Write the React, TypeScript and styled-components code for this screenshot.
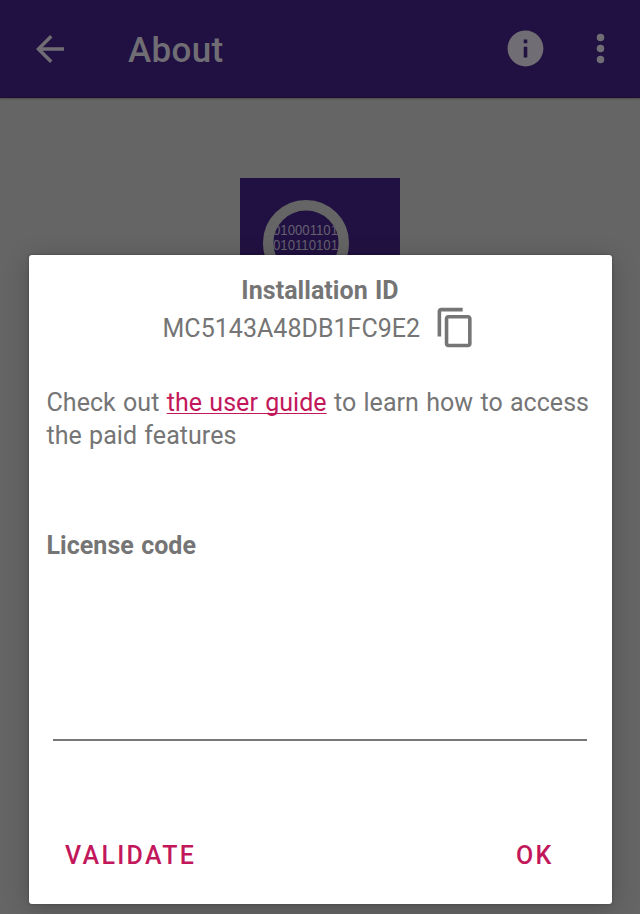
import React from 'react';
import styled, { createGlobalStyle } from 'styled-components';

const GlobalStyle = createGlobalStyle`
  * { box-sizing: border-box; }
  body { margin: 0; background: #656565; }
`;

const Screen = styled.div`
  position: relative;
  width: 640px;
  height: 914px;
  overflow: hidden;
  background: #656565;
  font-family: Roboto, sans-serif;
  color: #757575;
`;

const AppBar = styled.header`
  display: flex;
  align-items: center;
  height: 98px;
  padding: 0 18px 0 28.5px;
  background: #211142;
  border-bottom: 1px solid #1b0b2c;
  box-shadow: 0 1px 2px rgba(0, 0, 0, 0.25);
  color: #706e74;
`;

const Title = styled.h1`
  flex: 1;
  margin: 4px 0 0 57.5px;
  font-size: 35px;
  font-weight: 500;
  line-height: 42px;
  letter-spacing: 0.3px;
`;

const Actions = styled.div`
  display: flex;
  align-items: center;
  gap: 32px;
`;

const Icon = styled.svg<{ $size: number }>`
  display: block;
  flex: none;
  width: ${({ $size }) => $size}px;
  height: ${({ $size }) => $size}px;
  fill: currentColor;
`;

const Content = styled.main`
  display: flex;
  justify-content: center;
  padding-top: 80px;
`;

const Logo = styled.svg`
  display: block;
  width: 160px;
  height: 160px;
`;

const Dialog = styled.section`
  position: absolute;
  left: 28.5px;
  top: 254.5px;
  width: 583px;
  height: 649px;
  padding: 20px 18px 0;
  display: flex;
  flex-direction: column;
  background: #fff;
  border-radius: 3px;
  box-shadow: 0 4px 24px rgba(0, 0, 0, 0.22), 0 0 3px rgba(0, 0, 0, 0.25);
`;

const Label = styled.h2<{ $center?: boolean }>`
  margin: 0;
  font-size: 25px;
  font-weight: 700;
  line-height: 32px;
  letter-spacing: 0.05px;
  word-spacing: 1px;
  white-space: nowrap;
  text-align: ${({ $center }) => ($center ? 'center' : 'left')};
`;

const IdRow = styled.div`
  display: flex;
  align-items: center;
  height: 43px;
  margin-top: -1px;
  padding-left: 116px;
  gap: 14px;
`;

const InstallationId = styled.span`
  margin-top: 3px;
  font-size: 25px;
  line-height: 32px;
  letter-spacing: 0.03px;
  white-space: nowrap;
`;

const Message = styled.p`
  margin: 37.5px 0 77.5px;
  font-size: 25px;
  line-height: 33px;
  letter-spacing: 0.05px;
  word-spacing: 1px;
  white-space: nowrap;
`;

const Guide = styled.a`
  color: #c2185b;
  text-decoration: underline;
  text-decoration-thickness: 1px;
  text-underline-offset: 2px;
  text-decoration-skip-ink: none;
`;

const CodeInput = styled.input`
  display: block;
  height: 178px;
  margin: 1px 7px 0 6px;
  border: 0;
  border-bottom: 2px solid #777;
  outline: 0;
  background: transparent;
  font: inherit;
`;

const Buttons = styled.div`
  display: flex;
  justify-content: space-between;
  margin-top: 98px;
  padding: 0 40px 0 18.5px;
`;

const Button = styled.button`
  padding: 0;
  border: 0;
  background: none;
  color: #c2185b;
  font: 500 25px/34px Roboto, sans-serif;
  letter-spacing: 2.3px;
`;

export default function App() {
  return (
    <>
      <GlobalStyle />
      <Screen>
        <AppBar>
          <Icon $size={42} viewBox="0 0 24 24">
            <path d="M20 11H7.83l5.59-5.59L12 4l-8 8 8 8 1.41-1.41L7.83 13H20v-2z" />
          </Icon>
          <Title>About</Title>
          <Actions>
            <Icon $size={43} viewBox="0 0 24 24">
              <path d="M12 2C6.48 2 2 6.48 2 12s4.48 10 10 10 10-4.48 10-10S17.52 2 12 2zm1 15h-2v-6h2v6zm0-8h-2V7h2v2z" />
            </Icon>
            <Icon $size={43} viewBox="0 0 24 24">
              <circle cx="12" cy="5.9" r="2.1" />
              <circle cx="12" cy="12" r="2.1" />
              <circle cx="12" cy="18.1" r="2.1" />
            </Icon>
          </Actions>
        </AppBar>
        <Content>
          <Logo viewBox="0 0 160 160">
            <defs>
              <clipPath id="lens">
                <circle cx="66" cy="65" r="33" />
              </clipPath>
            </defs>
            <rect width="160" height="160" fill="#211142" />
            <circle cx="66" cy="65" r="37.8" fill="none" stroke="#656565" strokeWidth="10.5" />
            <g clipPath="url(#lens)" fill="#656070" fontFamily="Liberation Sans, sans-serif" fontSize="14">
              <text x="33" y="57" textLength="65" lengthAdjust="spacingAndGlyphs">010001101</text>
              <text x="33" y="72" textLength="65" lengthAdjust="spacingAndGlyphs">010110101</text>
            </g>
          </Logo>
        </Content>
        <Dialog role="dialog">
          <Label $center>Installation ID</Label>
          <IdRow>
            <InstallationId>MC5143A48DB1FC9E2</InstallationId>
            <Icon $size={43} viewBox="0 0 24 24">
              <path d="M16 1H4c-1.1 0-2 .9-2 2v14h2V3h12V1zm3 4H8c-1.1 0-2 .9-2 2v14c0 1.1.9 2 2 2h11c1.1 0 2-.9 2-2V7c0-1.1-.9-2-2-2zm0 16H8V7h11v14z" />
            </Icon>
          </IdRow>
          <Message>
            Check out <Guide>the user guide</Guide> to learn how to access
            <br />
            the paid features
          </Message>
          <Label>License code</Label>
          <CodeInput aria-label="License code" />
          <Buttons>
            <Button>VALIDATE</Button>
            <Button>OK</Button>
          </Buttons>
        </Dialog>
      </Screen>
    </>
  );
}
